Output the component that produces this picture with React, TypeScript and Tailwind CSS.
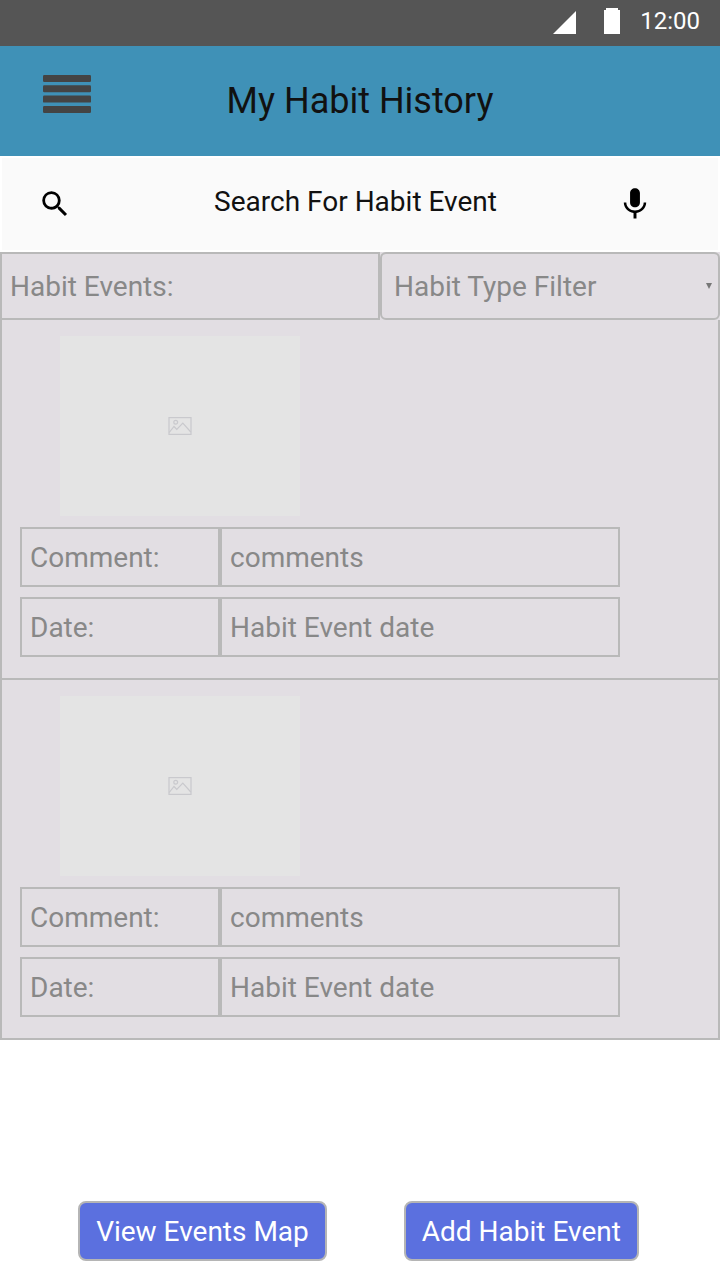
import React from "react";

type HabitEvent = { id: number; comment: string; date: string };

const events: HabitEvent[] = [
  { id: 1, comment: "comments", date: "Habit Event date" },
  { id: 2, comment: "comments", date: "Habit Event date" },
];

function StatusBar() {
  return (
    <div className="flex h-[46px] items-center justify-end bg-[#555555] pr-5 pb-1 text-white">
      <svg className="mr-7 h-[26px] w-6" viewBox="0 0 24 26" fill="currentColor" aria-hidden="true">
        <path d="M24 3v23H1z" />
      </svg>
      <svg className="mr-5 h-[26px] w-4" viewBox="0 0 16 26" fill="currentColor" aria-hidden="true">
        <path d="M2 0h12v2h2v24H0V2h2z" />
      </svg>
      <span className="text-2xl leading-7">12:00</span>
    </div>
  );
}

function Header() {
  return (
    <header className="grid h-[110px] grid-cols-[1fr_auto_1fr] items-center bg-[#3f91b7] px-[43px]">
      <button type="button" aria-label="Menu" className="mb-[14px] w-12 text-[#444444]">
        <svg className="block h-[38px] w-12" viewBox="0 0 48 38" fill="currentColor" aria-hidden="true">
          <rect y="0" width="48" height="7" rx="1.2" />
          <rect y="10.3" width="48" height="7" rx="1.2" />
          <rect y="20.6" width="48" height="7" rx="1.2" />
          <rect y="31" width="48" height="7" rx="1.2" />
        </svg>
      </button>
      <h1 className="text-4xl text-[#111111]">My Habit History</h1>
    </header>
  );
}

function SearchBar() {
  return (
    <form
      role="search"
      onSubmit={(e) => e.preventDefault()}
      className="flex h-24 items-center border-2 border-white bg-[#fafafa] pr-[67px] pl-9"
    >
      <button type="submit" aria-label="Search">
        <svg className="block h-[34px] w-[34px]" viewBox="0 0 24 24" fill="#000000" aria-hidden="true">
          <path d="M15.5 14h-.79l-.28-.27A6.471 6.471 0 0 0 16 9.5 6.5 6.5 0 1 0 9.5 16c1.61 0 3.09-.59 4.23-1.57l.27.28v.79l5 4.99L20.49 19l-4.99-5zm-6 0C7.01 14 5 11.99 5 9.5S7.01 5 9.5 5 14 7.01 14 9.5 11.99 14 9.5 14z" />
        </svg>
      </button>
      <input
        type="text"
        aria-label="Search For Habit Event"
        placeholder="Search For Habit Event"
        className="mb-1 min-w-0 flex-1 bg-transparent pl-5 text-center text-[28px] leading-9 text-[#111111] outline-none placeholder:text-[#111111]"
      />
      <button type="button" aria-label="Voice search">
        <svg className="block h-8 w-8" viewBox="0 0 24 24" fill="#000000" aria-hidden="true">
          <path d="M12 14.500c2.100 0 3.700-1.600 3.700-3.600V3.700C15.700 1.700 14.100.1 12 .1S8.300 1.700 8.300 3.700v7.200c0 2 1.600 3.600 3.700 3.600zm6.500-3.600c0 3.500-3.100 6-6.500 6s-6.500-2.500-6.500-6H3.600c0 4 3.300 7.300 7.300 7.900v4h2.200v-4c4-.6 7.300-3.900 7.300-7.900h-1.900z" />
        </svg>
      </button>
    </form>
  );
}

function FilterRow() {
  return (
    <div className="grid h-[68px] grid-cols-[19fr_17fr]">
      <h2 className="flex items-center border-2 border-[#b9b9b9] px-2 pt-[2px]">Habit Events:</h2>
      <div className="relative">
        <select
          aria-label="Habit Type Filter"
          className="block h-full w-full appearance-none rounded-md border-2 border-[#b9b9b9] bg-transparent pt-[2px] pr-6 pl-3 text-[#888888] outline-none"
        >
          <option>Habit Type Filter</option>
        </select>
        <svg
          className="pointer-events-none absolute top-[31px] right-2 h-[6px] w-[6px]"
          viewBox="0 0 6 6"
          fill="#777777"
          aria-hidden="true"
        >
          <path d="M0 0h6L3 6z" />
        </svg>
      </div>
    </div>
  );
}

function Field({ name, value }: { name: string; value: string }) {
  return (
    <div className="grid h-[60px] grid-cols-[1fr_2fr]">
      <dt className="flex items-center border-2 border-[#b9b9b9] px-2 pt-[2px]">{name}</dt>
      <dd className="flex items-center border-2 border-[#b9b9b9] px-2 pt-[2px]">{value}</dd>
    </div>
  );
}

function EventCard({ event }: { event: HabitEvent }) {
  return (
    <li className="border-x-2 border-b-2 border-[#b9b9b9] pt-4 pr-[98px] pb-[21px] pl-[18px]">
      <div className="ml-10 flex h-[180px] w-60 items-center justify-center bg-[#e4e4e4]">
        <svg
          className="h-[18px] w-6"
          viewBox="0 0 24 18"
          fill="none"
          stroke="#c9c9cd"
          strokeWidth="1.2"
          aria-hidden="true"
        >
          <rect x="1" y="0.6" width="22" height="16.8" />
          <circle cx="7.700" cy="5.200" r="1.900" />
          <path d="M1.200 15.500 6 9.500l2.800 3 6-6.300 8 8.800" />
        </svg>
      </div>
      <dl className="mt-[11px] flex flex-col gap-[10px]">
        <Field name="Comment:" value={event.comment} />
        <Field name="Date:" value={event.date} />
      </dl>
    </li>
  );
}

export default function App() {
  return (
    <div className="flex min-h-screen flex-col bg-white font-['Roboto',sans-serif] text-[28px] leading-9">
      <StatusBar />
      <Header />
      <SearchBar />
      <main className="bg-[#e2dee3] text-[#888888]">
        <FilterRow />
        <ul>
          {events.map((event) => (
            <EventCard key={event.id} event={event} />
          ))}
        </ul>
      </main>
      <footer className="mt-auto flex justify-center gap-[77px] pr-[3px] pb-[19px] text-white">
        <button type="button" className="h-[60px] rounded-lg border-2 border-[#b5b5b5] bg-[#5b70df] px-4 pt-[2px]">
          View Events Map
        </button>
        <button type="button" className="h-[60px] rounded-lg border-2 border-[#b5b5b5] bg-[#5b70df] px-4 pt-[2px]">
          Add Habit Event
        </button>
      </footer>
    </div>
  );
}
